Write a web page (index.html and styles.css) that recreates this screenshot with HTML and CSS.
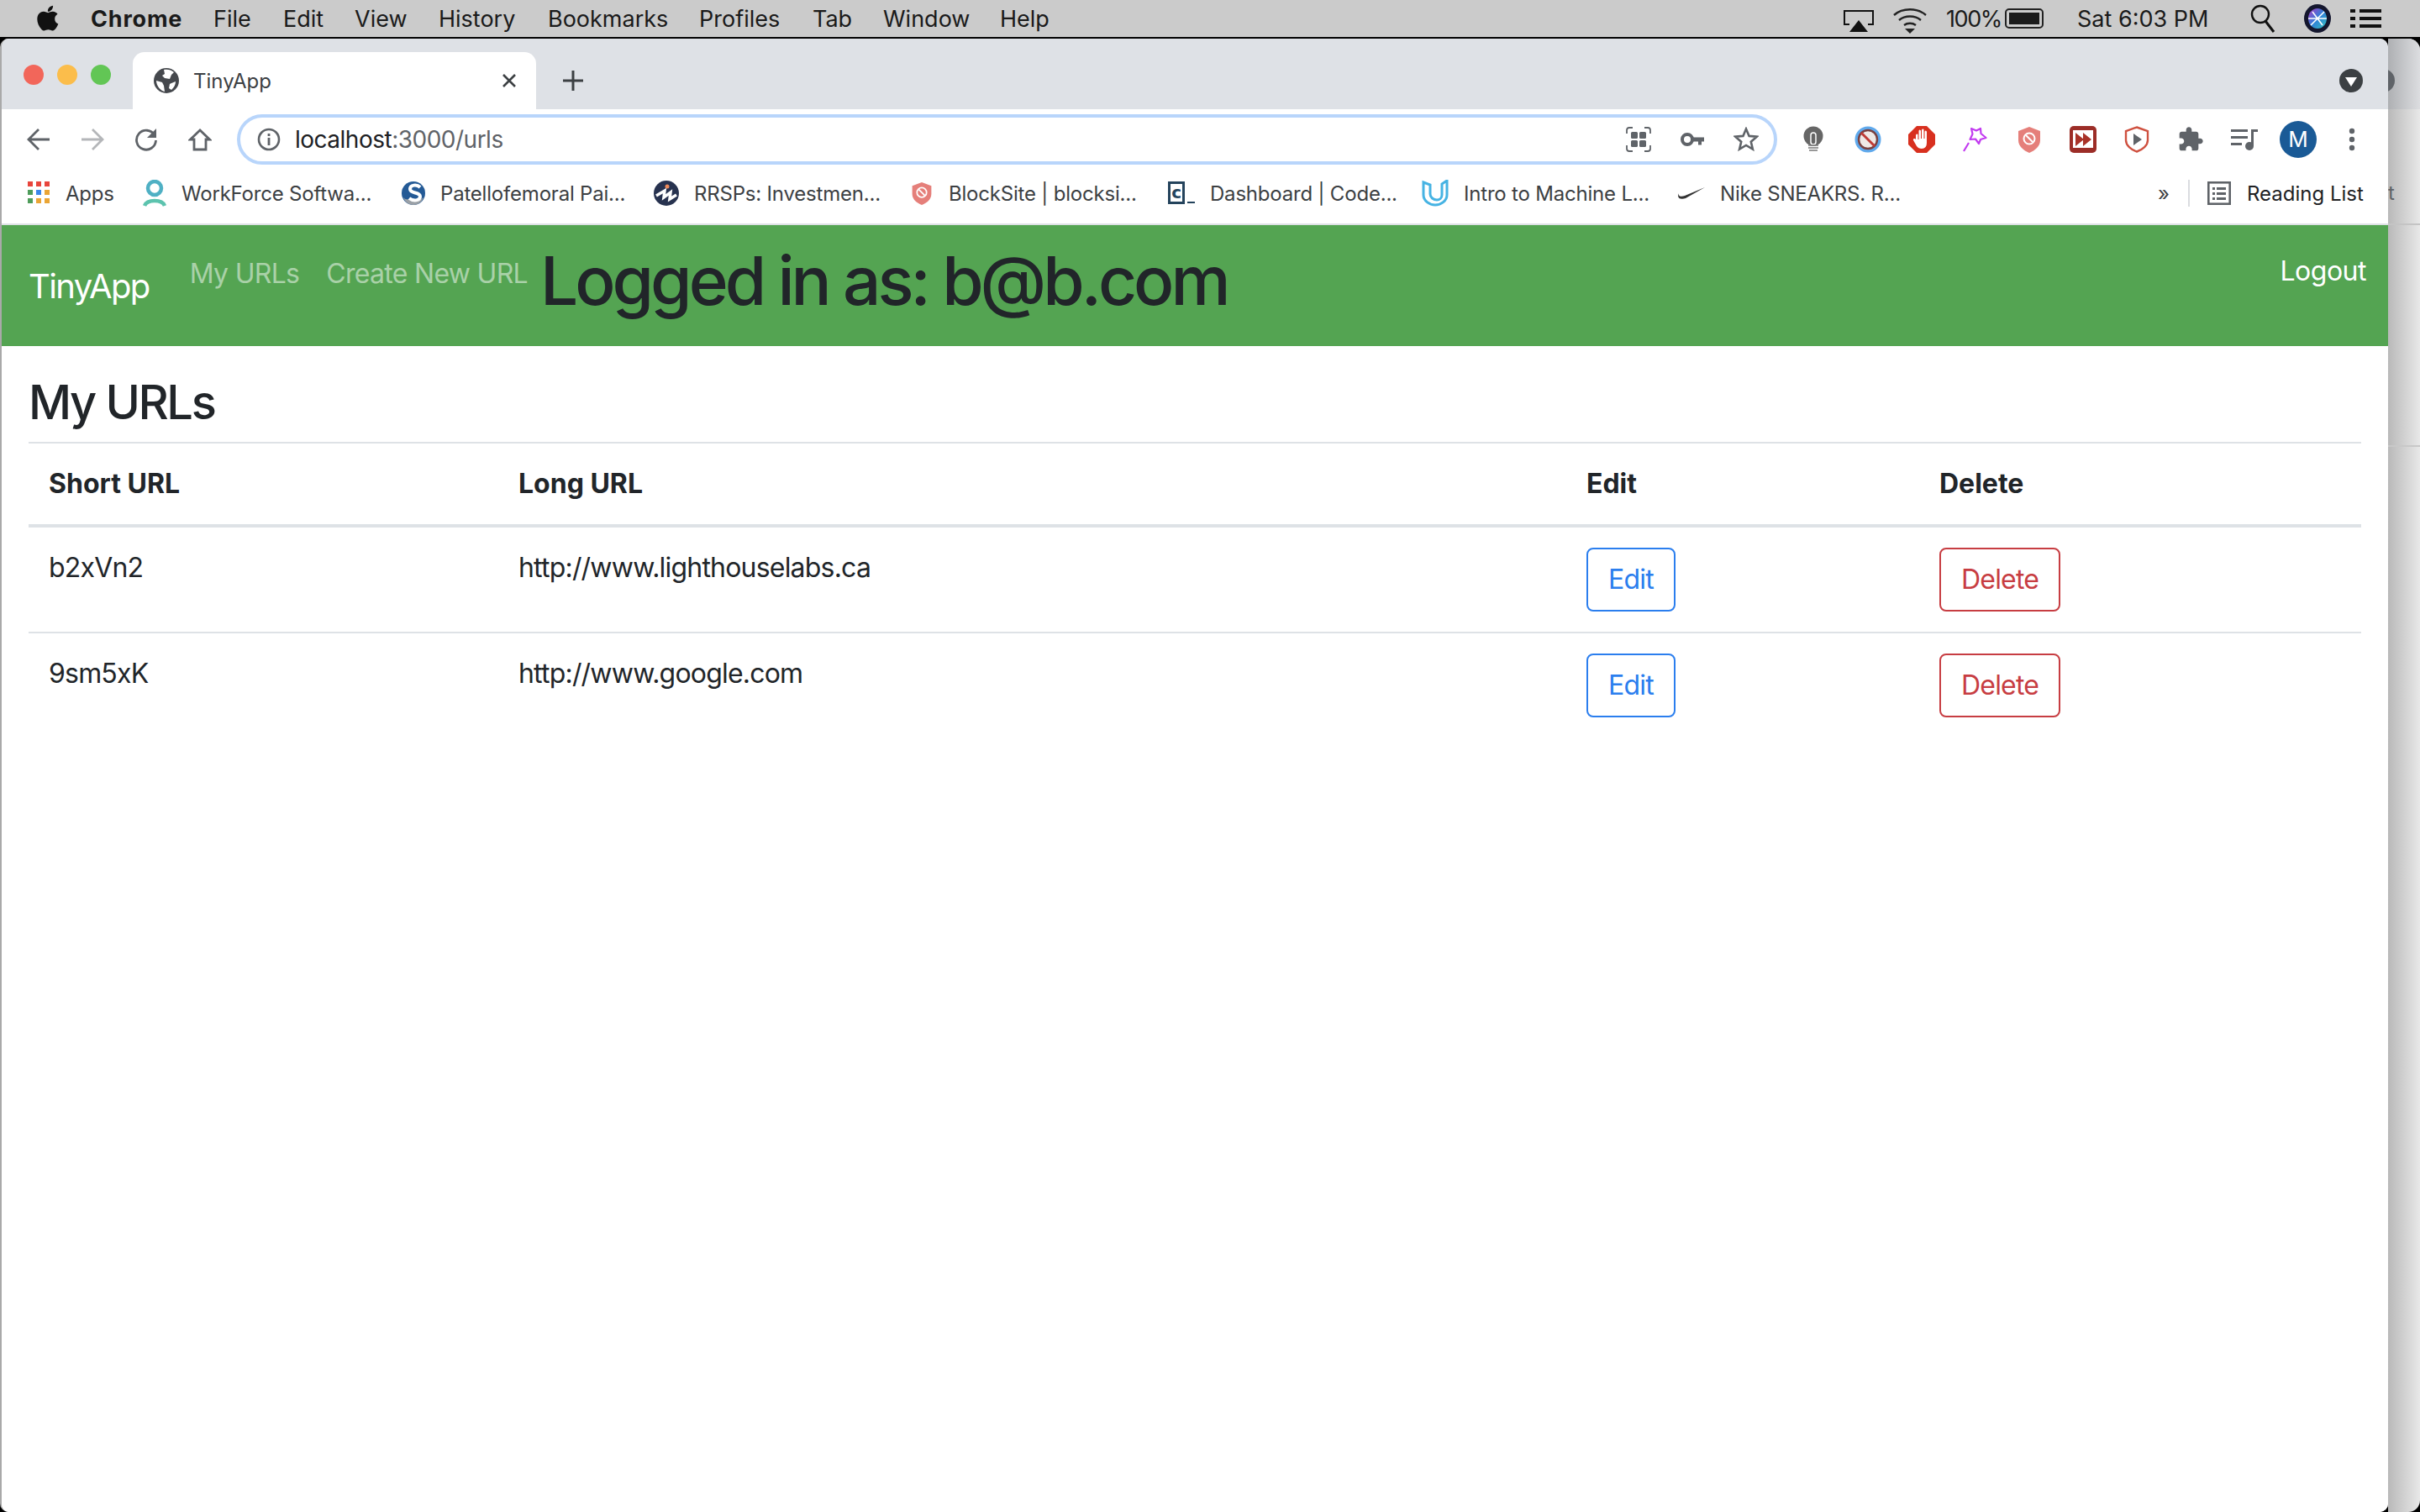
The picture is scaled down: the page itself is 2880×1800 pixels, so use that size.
FILE: index.html
```html
<!DOCTYPE html>
<html lang="en">
  <head>
    <meta charset="UTF-8" />
    <title>TinyApp</title>
    <link rel="stylesheet" href="styles.css">
  </head>
  <body>
    <!-- mac menu bar -->
    <div class="menu-bar">
      <div class="menu-left">
        <svg class="apple" viewBox="3 3 17 18.5"><path fill="#111" d="M17.05 20.28c-.98.95-2.05.8-3.08.35-1.09-.46-2.09-.48-3.24 0-1.44.62-2.2.44-3.06-.35C2.79 15.25 3.51 7.59 9.05 7.31c1.35.07 2.29.74 3.08.8 1.18-.24 2.31-.93 3.57-.84 1.51.12 2.65.72 3.4 1.8-3.12 1.87-2.38 5.98.48 7.13-.57 1.5-1.31 2.99-2.54 4.09l.01-.01zM12.03 7.25c-.15-2.23 1.66-4.07 3.74-4.25.29 2.58-2.34 4.5-3.74 4.25z"/></svg>
        <span class="menu-app">Chrome</span>
        <span>File</span>
        <span>Edit</span>
        <span>View</span>
        <span>History</span>
        <span>Bookmarks</span>
        <span>Profiles</span>
        <span>Tab</span>
        <span>Window</span>
        <span>Help</span>
      </div>
      <div class="menu-right">
        <svg class="status-icon" width="36" height="36" viewBox="0 0 36 36"><path fill="none" stroke="#111" stroke-width="2" d="M7 25H1V9h34v16h-6"/><path fill="#111" d="M18 20l11 14H7z"/></svg>
        <svg class="status-icon" width="40" height="36" viewBox="0 0 40 36"><g fill="none" stroke="#222" stroke-width="2.4"><path d="M1 14C11 5 29 5 39 14"/><path d="M7 20c7-6 19-6 26 0"/><path d="M13 26c4-3 10-3 14 0"/></g><path fill="#222" d="M14 30h12l-6 6z"/></svg>
        <span class="battery-text">100%</span>
        <div class="battery"><div class="battery-fill"></div></div>
        <span>Sat 6:03 PM</span>
        <svg class="status-icon" width="30" height="34" viewBox="0 0 30 34"><circle cx="12" cy="12" r="10" fill="none" stroke="#111" stroke-width="2.4"/><path stroke="#111" stroke-width="3" d="M18 20l10 13"/></svg>
        <svg class="status-icon" width="32" height="36" viewBox="0 0 32 36"><defs><linearGradient id="siri" x1="0" y1="0" x2="1" y2="1"><stop offset="0" stop-color="#b13bc4"/><stop offset=".5" stop-color="#2f7fd8"/><stop offset="1" stop-color="#36c6c0"/></linearGradient></defs><ellipse cx="16" cy="18" rx="16" ry="17" fill="#14162e"/><ellipse cx="16" cy="18" rx="11" ry="12" fill="url(#siri)"/><path stroke="#fff" stroke-width="1.6" d="M8 26L24 10M10 10l12 16M5 18h22"/></svg>
        <svg class="status-icon" width="37" height="22" viewBox="0 0 37 22"><g fill="#111"><rect x="0" y="0" width="6" height="4"/><rect x="11" y="0" width="26" height="4"/><rect x="0" y="9" width="6" height="4"/><rect x="11" y="9" width="26" height="4"/><rect x="0" y="18" width="6" height="4"/><rect x="11" y="18" width="26" height="4"/></g></svg>
      </div>
    </div>

    <div class="desktop">
      <div class="browser">
        <div class="tab-strip">
          <div class="traffic-lights">
            <div class="light light-red"></div>
            <div class="light light-yellow"></div>
            <div class="light light-green"></div>
          </div>
          <div class="tab">
            <svg width="30" height="30" viewBox="0 0 30 30"><circle cx="15" cy="15" r="15" fill="#45484d"/><path fill="#fff" d="M12 2c4-1 9 0 12 3l-3 3-2 5-6-1-3-3 3-2zM3 15l7 2 2 4 1 7C8 27 3 21 3 15zM21 18l5-2c0 4-2 7-5 10l-3-2 1-5z"/></svg>
            <span class="tab-title">TinyApp</span>
            <svg class="tab-close" width="18" height="18" viewBox="0 0 18 18"><path stroke="#3c4043" stroke-width="2.6" d="M2 2l14 14M16 2L2 16"/></svg>
          </div>
          <svg class="new-tab" width="26" height="26" viewBox="0 0 26 26"><path stroke="#3c4043" stroke-width="3" d="M13 1v24M1 13h24"/></svg>
          <svg class="tab-search" width="28" height="28" viewBox="0 0 28 28"><circle cx="14" cy="14" r="14" fill="#3c4043"/><path fill="#fff" d="M7 10h14l-7 11z"/></svg>
        </div>

        <div class="toolbar">
          <div class="nav-buttons">
            <svg width="28" height="28" viewBox="0 0 28 28"><path fill="none" stroke="#5f6368" stroke-width="2.8" d="M27 14H3M14 2L2 14l12 12"/></svg>
            <svg width="28" height="28" viewBox="0 0 28 28"><path fill="none" stroke="#b4b6b9" stroke-width="2.8" d="M1 14h24M14 2l12 12-12 12"/></svg>
            <svg width="28" height="28" viewBox="0 0 28 28"><path fill="none" stroke="#5f6368" stroke-width="2.8" d="M24 9a11.5 11.5 0 1 0 1.5 6"/><path fill="#5f6368" d="M26 1v11H15z"/></svg>
            <svg width="28" height="28" viewBox="0 0 28 28"><path fill="none" stroke="#5f6368" stroke-width="2.8" d="M14 3L2.5 14H7v12h14V14h4.5z"/></svg>
          </div>
          <div class="omnibox">
            <svg width="28" height="28" viewBox="0 0 28 28"><circle cx="14" cy="14" r="12" fill="none" stroke="#5f6368" stroke-width="2.6"/><path stroke="#5f6368" stroke-width="2.8" d="M14 12v9M14 7v3"/></svg>
            <span class="url"><span class="url-host">localhost</span>:3000/urls</span>
            <div class="omni-icons">
              <svg width="30" height="30" viewBox="0 0 30 30"><path fill="none" stroke="#5f6368" stroke-width="1.8" d="M1 8V4q0-3 3-3h4M22 1h4q3 0 3 3v4M29 22v4q0 3-3 3h-4M8 29H4q-3 0-3-3v-4"/><g fill="#5f6368"><rect x="6" y="6" width="8" height="8" rx="1.5"/><rect x="16" y="6" width="8" height="8" rx="1.5"/><rect x="6" y="16" width="8" height="8" rx="1.5"/><rect x="16" y="16" width="8" height="8" rx="1.5"/></g></svg>
              <svg width="30" height="30" viewBox="0 0 30 30"><circle cx="9" cy="15" r="6" fill="none" stroke="#5f6368" stroke-width="4"/><path fill="#5f6368" d="M14 12.5h15v5h-3v4h-4v-4h-8z"/></svg>
              <svg width="30" height="30" viewBox="0 0 30 30"><path fill="none" stroke="#5f6368" stroke-width="2.6" d="M15 2.5l3.6 8.4 9.1.8-6.9 6 2.1 8.9-7.9-4.7-7.9 4.7 2.1-8.9-6.9-6 9.1-.8z"/></svg>
            </div>
          </div>
          <div class="extensions">
            <svg width="32" height="32" viewBox="0 0 32 32"><circle cx="15" cy="12" r="11.5" fill="#666"/><rect x="12" y="8" width="6" height="14" rx="3" fill="none" stroke="#fff" stroke-width="1.5"/><path stroke="#777" stroke-width="1.6" d="M9 23h12M9 26h12M10 29h10"/></svg>
            <svg width="32" height="32" viewBox="0 0 32 32"><circle cx="16" cy="16" r="15.5" fill="#5fa9ec"/><circle cx="16" cy="16" r="11" fill="#efe9e6" stroke="#7a4140" stroke-width="2.5"/><path stroke="#bf3b36" stroke-width="3" d="M8 8l16 16"/></svg>
            <svg width="32" height="32" viewBox="0 0 32 32"><path fill="#d8301f" d="M10 0h12l10 10v12L22 32H10L0 22V10z"/><path fill="#fff" d="M9 11q0-1.500 1.300-1.500T11.500 11v5h1V6q0-1.500 1.200-1.500T15 6v9h1V5q0-1.500 1.300-1.500T18.500 5v10h1V7q0-1.500 1.200-1.500T22 7v13q0 7-6 7-4 0-6-3l-4-7q-.5-1.500.8-2t2.200 1z"/></svg>
            <svg width="32" height="32" viewBox="0 0 32 32"><path fill="none" stroke="#c23cf0" stroke-width="2.2" stroke-linejoin="round" d="M11 3l6 2.500L22 3l.5 6 6 5-6.500 2-2 5-4-5.500-6.500.5 3-6.500zM8 20L2 30"/></svg>
            <svg width="32" height="32" viewBox="0 0 32 32"><path fill="#e57f7a" d="M16 1l13 5v11c0 7-6 12-13 15C9 29 3 24 3 17V6z"/><circle cx="16" cy="15" r="6.500" fill="none" stroke="#fff" stroke-width="2"/><path stroke="#fff" stroke-width="2" d="M12 11l8 8"/></svg>
            <svg width="32" height="32" viewBox="0 0 32 32"><rect width="32" height="32" rx="5" fill="#9c2d27"/><rect x="4" y="5" width="24" height="21" fill="#fff"/><path fill="#a93228" d="M7 8l10 8-10 8zM16 8l10 8-10 8z"/></svg>
            <svg width="32" height="32" viewBox="0 0 32 32"><path fill="#fff" stroke="#cf5140" stroke-width="2.4" d="M16 1.500l13 4.500v11c0 6-6 11-13 13.500C9 28 3 23 3 17V6z"/><path fill="#5f6368" d="M12 9l10 7-10 7z"/></svg>
            <svg width="32" height="32" viewBox="0 0 24 24"><path fill="#5f6368" d="M20.5 11H19V7c0-1.100-.9-2-2-2h-4V3.500C13 2.120 11.880 1 10.500 1S8 2.120 8 3.500V5H4c-1.100 0-1.990.9-1.990 2v3.800H3.500c1.490 0 2.700 1.210 2.700 2.700s-1.210 2.700-2.700 2.700H2V20c0 1.100.9 2 2 2h3.800v-1.500c0-1.490 1.210-2.700 2.700-2.700 1.490 0 2.700 1.210 2.700 2.700V22H17c1.100 0 2-.9 2-2v-4h1.500c1.380 0 2.500-1.120 2.500-2.500S21.880 11 20.500 11z"/></svg>
            <svg width="32" height="26" viewBox="0 0 32 26"><g fill="#5f6368"><rect y="1" width="20" height="3"/><rect y="9" width="20" height="3"/><rect y="17" width="13" height="3"/><circle cx="22" cy="21" r="5"/><rect x="24" y="1" width="3" height="20"/><rect x="24" y="1" width="8" height="3"/></g></svg>
            <div class="avatar">M</div>
            <svg width="10" height="30" viewBox="0 0 10 30"><g fill="#5f6368"><circle cx="5" cy="5" r="3.200"/><circle cx="5" cy="15" r="3.200"/><circle cx="5" cy="25" r="3.200"/></g></svg>
          </div>
        </div>

        <div class="bookmarks">
          <div class="bookmark-list">
            <div class="bookmark">
              <svg width="28" height="28" viewBox="0 0 28 28"><g fill="#e8453c"><rect x="1" y="0" width="6" height="6"/><rect x="11" y="0" width="6" height="6"/><rect x="21" y="0" width="6" height="6"/></g><rect x="1" y="10" width="6" height="6" fill="#4f9d5b"/><rect x="11" y="10" width="6" height="6" fill="#3b87ea"/><rect x="21" y="10" width="6" height="6" fill="#eaa535"/><rect x="1" y="20" width="6" height="6" fill="#4f9d5b"/><rect x="11" y="20" width="6" height="6" fill="#eaa535"/><rect x="21" y="20" width="6" height="6" fill="#eaa535"/></svg>
              <span>Apps</span>
            </div>
            <div class="bookmark">
              <svg width="28" height="32" viewBox="0 0 28 32"><circle cx="14" cy="10" r="8" fill="none" stroke="#4fb0c4" stroke-width="4.500"/><path fill="none" stroke="#5cc3ae" stroke-width="4.500" d="M2 31c3-8 21-8 24 0"/></svg>
              <span>WorkForce Softwa...</span>
            </div>
            <div class="bookmark">
              <svg width="28" height="32" viewBox="0 0 28 32"><circle cx="14" cy="16" r="14" fill="#245a96"/><path fill="#9aa0a6" d="M2 21c5 5 8 0 12 3s8 0 12-3c-2 6-7 9-12 9S4 27 2 21z"/><path fill="none" stroke="#fff" stroke-width="4" d="M22 9c-4-4-12-3-12 2 0 6 12 3 12 9 0 5-8 6-13 2"/></svg>
              <span>Patellofemoral Pai...</span>
            </div>
            <div class="bookmark">
              <svg width="30" height="32" viewBox="0 0 30 32"><circle cx="15" cy="16" r="15" fill="#27324f"/><circle cx="16" cy="8" r="2.500" fill="#ee8a5a"/><path fill="none" stroke="#fff" stroke-width="3.500" d="M3 19l10-6-1 8 8-6-1 8 8-5"/></svg>
              <span>RRSPs: Investmen...</span>
            </div>
            <div class="bookmark">
              <svg width="28" height="32" viewBox="0 0 32 32"><path fill="#e57f7a" d="M16 1l13 5v11c0 7-6 12-13 15C9 29 3 24 3 17V6z"/><circle cx="16" cy="15" r="6.500" fill="none" stroke="#fff" stroke-width="2"/><path stroke="#fff" stroke-width="2" d="M12 11l8 8"/></svg>
              <span>BlockSite | blocksi...</span>
            </div>
            <div class="bookmark">
              <svg width="32" height="28" viewBox="0 0 32 28"><rect x="1.500" y="1.500" width="17" height="24" fill="#fff" stroke="#24435c" stroke-width="3"/><text x="10" y="20" text-anchor="middle" class="code-c">c</text><rect x="23" y="24" width="9" height="2" fill="#24435c"/></svg>
              <span>Dashboard | Code...</span>
            </div>
            <div class="bookmark">
              <svg width="32" height="32" viewBox="0 0 32 32"><path fill="none" stroke="#46b3e3" stroke-width="3" d="M2 3v15c0 7 7 12 14 12s14-5 14-12V1l-6 4v13c0 4-3 6-6 6-4 0-8-3-8-7V6z"/></svg>
              <span>Intro to Machine L...</span>
            </div>
            <div class="bookmark">
              <svg width="32" height="28" viewBox="0 0 32 28"><path fill="#333" d="M32 7L8 17c-4 1.500-8 1-7-3-3 6 2 8 8 6z"/></svg>
              <span>Nike SNEAKRS. R...</span>
            </div>
          </div>
          <span class="bookmark-more">»</span>
          <div class="bookmark-sep"></div>
          <div class="reading-list">
            <svg width="28" height="28" viewBox="0 0 28 28"><rect x="1.300" y="1.300" width="25.400" height="25.400" fill="none" stroke="#5f6368" stroke-width="2.600"/><g fill="#5f6368"><rect x="6" y="7" width="3" height="3"/><rect x="11" y="7" width="11" height="3"/><rect x="6" y="13" width="3" height="3"/><rect x="11" y="13" width="11" height="3"/><rect x="6" y="19" width="3" height="3"/><rect x="11" y="19" width="11" height="3"/></g></svg>
            <span>Reading List</span>
          </div>
        </div>

        <!-- the page itself -->
        <div class="page">
          <nav class="navbar">
            <a class="brand">TinyApp</a>
            <ul class="nav-links">
              <li><a>My URLs</a></li>
              <li><a>Create New URL</a></li>
            </ul>
            <h1 class="logged-in">Logged in as: b@b.com</h1>
            <a class="logout">Logout</a>
          </nav>

          <main class="content">
            <h3 class="page-title">My URLs</h3>
            <table class="url-table">
              <thead>
                <tr>
                  <th class="col-short">Short URL</th>
                  <th class="col-long">Long URL</th>
                  <th class="col-edit">Edit</th>
                  <th class="col-delete">Delete</th>
                </tr>
              </thead>
              <tbody>
                <tr>
                  <td>b2xVn2</td>
                  <td>http://www.lighthouselabs.ca</td>
                  <td><a class="btn btn-edit">Edit</a></td>
                  <td><a class="btn btn-delete">Delete</a></td>
                </tr>
                <tr>
                  <td>9sm5xK</td>
                  <td>http://www.google.com</td>
                  <td><a class="btn btn-edit">Edit</a></td>
                  <td><a class="btn btn-delete">Delete</a></td>
                </tr>
              </tbody>
            </table>
          </main>
        </div>
      </div>

      <!-- the other window peeking out behind -->
      <div class="back-window">
        <div class="back-strip"><div class="back-circle"></div></div>
        <div class="back-toolbar"></div>
        <div class="back-bookmarks">t</div>
        <div class="back-line"></div>
      </div>
    </div>
  </body>
</html>
```

FILE: styles.css
```css
* {
  box-sizing: border-box;
}

body {
  margin: 0;
  width: 2880px;
  height: 1800px;
  overflow: hidden;
  background-color: #000;
  font-family: Inter, "Liberation Sans", sans-serif;
  color: #212529;
}

/* menu bar */
.menu-bar {
  display: flex;
  justify-content: space-between;
  align-items: center;
  height: 46px;
  background-color: #cbcbcb;
  border-bottom: 2px solid #000;
  font-size: 27px;
  color: #1a1a1a;
}

.menu-left {
  display: grid;
  grid-template-columns: 66px 146px 83px 85px 100px 130px 180px 135px 84px 139px auto;
  align-items: center;
  padding-left: 42px;
}

.apple {
  width: 28px;
  height: 32px;
}

.menu-app {
  font-weight: 700;
  letter-spacing: 0.8px;
}

.menu-right {
  display: grid;
  grid-template-columns: 59px 63px 70px 86px 206px 64px 55px 37px;
  align-items: center;
  padding-right: 46px;
}

.battery-text {
  letter-spacing: -1.4px;
}

.status-icon {
  display: block;
}

.battery {
  width: 46px;
  height: 24px;
  padding: 3px;
  border: 2px solid #222;
  border-radius: 5px;
}

.battery-fill {
  height: 100%;
  background-color: #1a1a1a;
}

/* window layout */
.desktop {
  display: flex;
  height: 1754px;
}

.browser {
  width: 2842px;
  height: 1754px;
  display: flex;
  flex-direction: column;
  border-left: 2px solid #a9a9a9;
  border-radius: 10px 10px 10px 10px;
  overflow: hidden;
  background-color: #fff;
}

/* tabs */
.tab-strip {
  display: flex;
  align-items: flex-end;
  height: 84px;
  background-color: #dee1e6;
}

.traffic-lights {
  display: flex;
  gap: 16px;
  width: 156px;
  padding-left: 26px;
  align-self: flex-start;
  margin-top: 31px;
}

.light {
  width: 24px;
  height: 24px;
  border-radius: 50%;
}

.light-red {
  background-color: #f2665a;
}

.light-yellow {
  background-color: #fbbd4b;
}

.light-green {
  background-color: #62c655;
}

.tab {
  display: flex;
  align-items: center;
  width: 480px;
  height: 68px;
  padding: 0 23px 0 25px;
  background-color: #fff;
  border-radius: 14px 14px 0 0;
  font-size: 24px;
  color: #3c4043;
}

.tab-title {
  flex-grow: 1;
  margin-left: 17px;
}

.new-tab {
  margin: 0 0 21px 31px;
}

.tab-search {
  margin: 0 30px 20px auto;
}

/* toolbar */
.toolbar {
  display: flex;
  align-items: center;
  height: 68px;
  padding-top: 4px;
  background-color: #fff;
}

.nav-buttons {
  display: grid;
  grid-template-columns: repeat(4, 64px);
  justify-items: center;
  width: 280px;
  padding-left: 12px;
}

.omnibox {
  display: flex;
  align-items: center;
  width: 1833px;
  height: 60px;
  padding: 0 1px 0 20px;
  border: 4px solid #b8d5fb;
  border-radius: 30px;
}

.url {
  flex-grow: 1;
  margin-left: 17px;
  font-size: 28px;
  letter-spacing: -0.5px;
  color: #5f6368;
}

.url-host {
  color: #202124;
}

.omni-icons {
  display: grid;
  grid-template-columns: repeat(3, 64px);
  justify-items: center;
}

.extensions {
  display: grid;
  grid-template-columns: repeat(11, 64px);
  align-items: center;
  justify-items: center;
  margin-left: 12px;
}

.avatar {
  width: 44px;
  height: 44px;
  border-radius: 50%;
  background-color: #1a5a96;
  color: #fff;
  font-size: 26px;
  line-height: 44px;
  text-align: center;
}

/* bookmarks */
.bookmarks {
  display: flex;
  align-items: center;
  height: 70px;
  padding-bottom: 4px;
  background-color: #fff;
  border-bottom: 2px solid #dfe1e5;
  font-size: 24px;
  color: #3c4043;
}

.bookmark-list {
  display: grid;
  grid-template-columns: 138px 308px 300px 305px 307px 302px 305px 300px;
  width: 2566px;
  padding-left: 30px;
  letter-spacing: -0.2px;
}

.bookmark {
  display: flex;
  align-items: center;
  gap: 18px;
  white-space: nowrap;
}

.code-c {
  font-family: "DejaVu Sans", sans-serif;
  font-size: 20px;
  font-weight: 700;
  fill: #24435c;
}

.bookmark-more {
  width: 36px;
}

.bookmark-sep {
  width: 2px;
  height: 32px;
  background-color: #dadce0;
}

.reading-list {
  display: flex;
  align-items: center;
  gap: 19px;
  margin-left: 21px;
  color: #202124;
}

/* page */
.page {
  flex-grow: 1;
  background-color: #fff;
}

.navbar {
  display: flex;
  align-items: center;
  height: 144px;
  padding: 16px 32px;
  background-color: #54a452;
}

.brand {
  margin-right: 32px;
  font-size: 40px;
  letter-spacing: -1.6px;
  color: #fff;
}

.nav-links {
  display: flex;
  margin: 0 0 28px;
  padding: 0;
  list-style: none;
  font-size: 32px;
  letter-spacing: -0.7px;
  color: rgba(255, 255, 255, 0.5);
}

.nav-links a {
  display: block;
  padding: 0 16px;
  line-height: 48px;
}

.logged-in {
  margin: 0 0 12px -1px;
  font-size: 80px;
  font-weight: 500;
  line-height: 96px;
  letter-spacing: -4px;
}

.logout {
  margin-left: auto;
  margin-right: -6px;
  margin-bottom: 34px;
  font-size: 32px;
  line-height: 48px;
  letter-spacing: -0.5px;
  color: #fff;
}

.content {
  padding: 0 32px;
}

.page-title {
  margin: 0;
  padding-top: 34px;
  height: 116px;
  font-size: 56px;
  font-weight: 500;
  line-height: 67px;
  letter-spacing: -2.4px;
  border-bottom: 2px solid #dee2e6;
}

.url-table {
  width: 100%;
  border-collapse: collapse;
  table-layout: fixed;
  font-size: 32px;
  line-height: 48px;
}

.col-short {
  width: 559px;
}

.col-long {
  width: 1271px;
}

.col-edit {
  width: 420px;
}

.url-table th {
  padding: 24px;
  text-align: left;
  font-weight: 700;
  border-bottom: 4px solid #dee2e6;
}

.url-table td {
  padding: 24px;
  vertical-align: top;
  letter-spacing: -0.8px;
  border-top: 2px solid #dee2e6;
}

.btn {
  display: inline-block;
  vertical-align: top;
  height: 76px;
  padding: 12px 24px;
  border: 2px solid;
  border-radius: 8px;
  line-height: 48px;
}

.btn-edit {
  color: #2b7eee;
}

.btn-delete {
  color: #c73d42;
}

/* other window */
.back-window {
  flex-grow: 1;
  display: flex;
  flex-direction: column;
  border-radius: 0 14px 14px 0;
  overflow: hidden;
  background: linear-gradient(to right, #b9b9b9, #e8e8e8);
  font-size: 24px;
  color: #5f6368;
}

.back-strip {
  height: 84px;
  padding-top: 36px;
  background: linear-gradient(to right, #aeb0b3, #dcdde0);
}

.back-circle {
  width: 28px;
  height: 28px;
  margin-left: -20px;
  border-radius: 50%;
  background-color: #5f6368;
}

.back-toolbar {
  height: 68px;
}

.back-bookmarks {
  height: 70px;
  line-height: 64px;
  border-bottom: 2px solid #c4c4c4;
}

.back-line {
  height: 264px;
  border-bottom: 2px solid #c8c8c8;
}
```
